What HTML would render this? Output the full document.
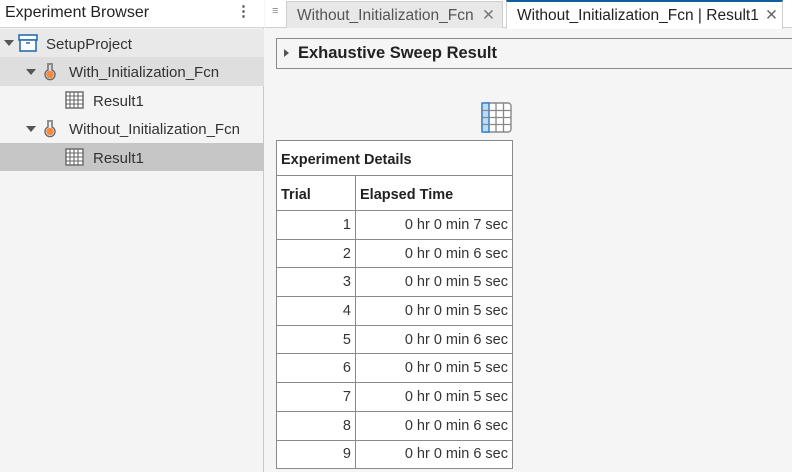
<!DOCTYPE html>
<html><head><style>
*{margin:0;padding:0;box-sizing:border-box}
body{width:792px;height:472px;overflow:hidden;background:#f5f5f5;font-family:"Liberation Sans",sans-serif;position:relative;color:#222}
.abs{position:absolute}
.lp{left:0;top:0;width:264px;height:472px;background:#f4f4f4;border-right:1px solid #c8c8c8}
.hdr{left:0;top:0;width:264px;height:28px;background:#fff;border-bottom:1px solid #d6d6d6;font-size:16px;padding:4px 0 0 5px;color:#222}
.row{position:absolute;left:0;width:264px;font-size:15px;color:#333;line-height:31px}
.tri{position:absolute;width:0;height:0;border-left:5px solid transparent;border-right:5px solid transparent;border-top:6px solid #555}
.tabs{left:265px;top:0;width:527px;height:28px;background:#fff;border-bottom:1px solid #cfcfcf}
.tab{position:absolute;top:1px;height:27px;font-size:15.5px;line-height:27px;padding-left:10px}
table{border-collapse:collapse;background:#fff;font-size:14.5px}
td{border:1.5px solid #8a8a8a;height:28.7px;padding:0 4px;color:#333}
</style></head><body>
<div class="abs lp"></div>
<div class="abs hdr">Experiment Browser<span style="position:absolute;left:236px;top:2px;font-weight:bold;font-size:15px;color:#555">⋮</span></div>
<div class="row" style="top:29px;height:28px;background:#e9e9e9"><span class="tri" style="left:4px;top:11px"></span>
<svg class="abs" style="left:18px;top:5px" width="20" height="18"><rect x="1" y="1" width="18" height="5" fill="#fff" stroke="#2a6fb0" stroke-width="1.6"/><rect x="2" y="6" width="16" height="11" fill="#fff" stroke="#2a6fb0" stroke-width="1.6"/><line x1="8" y1="9" x2="12" y2="9" stroke="#2a6fb0" stroke-width="1.5"/></svg>
<span style="position:absolute;left:46px">SetupProject</span></div>
<div class="row" style="top:57px;height:29px;background:#dedede"><span class="tri" style="left:26px;top:12px"></span>
<svg class="abs" style="left:43px;top:5px" width="14" height="19"><line x1="4" y1="2" x2="10" y2="2" stroke="#666" stroke-width="1.4"/><path d="M5 3V8A5 5 0 1 0 9 8V3" fill="none" stroke="#666" stroke-width="1.4"/><circle cx="7" cy="12.5" r="3.8" fill="#f58a43"/></svg>
<span style="position:absolute;left:69px">With_Initialization_Fcn</span></div>
<div class="row" style="top:86px;height:28px">
<svg class="abs" style="left:65px;top:5px" width="19" height="18"><rect x="1" y="1" width="17" height="16" fill="#fff" stroke="#666" stroke-width="1.4"/><path d="M1 5H18M1 9H18M1 13H18M5 1V17M9 1V17M13 1V17" stroke="#666" stroke-width="1.1"/></svg>
<span style="position:absolute;left:93px">Result1</span></div>
<div class="row" style="top:114px;height:29px"><span class="tri" style="left:26px;top:12px"></span>
<svg class="abs" style="left:43px;top:5px" width="14" height="19"><line x1="4" y1="2" x2="10" y2="2" stroke="#666" stroke-width="1.4"/><path d="M5 3V8A5 5 0 1 0 9 8V3" fill="none" stroke="#666" stroke-width="1.4"/><circle cx="7" cy="12.5" r="3.8" fill="#f58a43"/></svg>
<span style="position:absolute;left:69px">Without_Initialization_Fcn</span></div>
<div class="row" style="top:143px;height:28px;background:#c6c6c6">
<svg class="abs" style="left:65px;top:5px" width="19" height="18"><rect x="1" y="1" width="17" height="16" fill="#fff" stroke="#666" stroke-width="1.4"/><path d="M1 5H18M1 9H18M1 13H18M5 1V17M9 1V17M13 1V17" stroke="#666" stroke-width="1.1"/></svg>
<span style="position:absolute;left:93px">Result1</span></div>

<div class="abs tabs"></div>
<div class="abs" style="left:272px;top:5px;font-size:11px;color:#888">≡</div>
<div class="tab" style="left:286px;width:217px;background:#e8e8e8;border:1px solid #cfcfcf;border-bottom:none;color:#555">Without_Initialization_Fcn<span style="position:absolute;left:195px;color:#777">✕</span></div>
<div class="tab" style="left:506px;width:277px;background:#fff;border-top:2px solid #0d5f9e;border-left:1px solid #cfcfcf;border-right:1px solid #cfcfcf;top:0;height:29px;color:#222">Without_Initialization_Fcn | Result1<span style="position:absolute;left:258px;color:#666">✕</span></div>

<div class="abs" style="left:276px;top:38px;width:520px;height:31px;border:1.5px solid #8a8a8a;background:#f5f5f5">
<span class="abs" style="left:7px;top:10px;width:0;height:0;border-top:4.5px solid transparent;border-bottom:4.5px solid transparent;border-left:5px solid #555"></span>
<span class="abs" style="left:21px;top:5px;font-weight:bold;font-size:16.5px;color:#222">Exhaustive Sweep Result</span></div>

<svg class="abs" style="left:481px;top:102px" width="31" height="31"><rect x="1" y="1" width="29" height="29" rx="3" fill="#fff" stroke="#888" stroke-width="1.4"/><rect x="1" y="1" width="7" height="29" fill="#bfdcf5" stroke="#2a7acb" stroke-width="1.4"/><path d="M1 8.5H30M1 15.5H30M1 22.5H30M15 1V30M22.5 1V30" stroke="#888" stroke-width="1.3"/></svg>

<table class="abs" style="left:276px;top:140px;width:237px">
<tr><td colspan="2" style="height:35px;font-weight:bold;color:#222;padding-top:3px">Experiment Details</td></tr>
<tr><td style="height:35px;width:79px;font-weight:bold;color:#222;padding-top:3px">Trial</td><td style="font-weight:bold;color:#222;padding-top:3px">Elapsed Time</td></tr>
<tr><td align="right">1</td><td align="right">0 hr 0 min 7 sec</td></tr>
<tr><td align="right">2</td><td align="right">0 hr 0 min 6 sec</td></tr>
<tr><td align="right">3</td><td align="right">0 hr 0 min 5 sec</td></tr>
<tr><td align="right">4</td><td align="right">0 hr 0 min 5 sec</td></tr>
<tr><td align="right">5</td><td align="right">0 hr 0 min 6 sec</td></tr>
<tr><td align="right">6</td><td align="right">0 hr 0 min 5 sec</td></tr>
<tr><td align="right">7</td><td align="right">0 hr 0 min 5 sec</td></tr>
<tr><td align="right">8</td><td align="right">0 hr 0 min 6 sec</td></tr>
<tr><td align="right">9</td><td align="right">0 hr 0 min 6 sec</td></tr>
</table>
</body></html>
